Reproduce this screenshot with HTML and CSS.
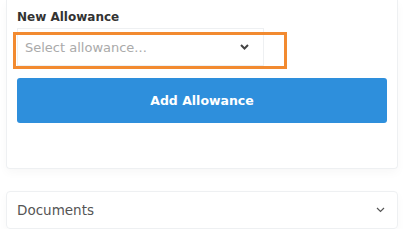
FILE: index.html
```html
<!DOCTYPE html>
<html lang="en">
<head>
    <meta charset="UTF-8">
    <meta name="viewport" content="width=device-width, initial-scale=1.0">
    <title>Allowances</title>
    <link rel="stylesheet" href="styles.css">
</head>
<body>

    <div class="page">
        <!-- Allowance Card -->
        <div class="card">
            <label class="field-label" for="allowance">New Allowance</label>
            <div class="select-row">
                <div class="select" id="allowance">
                    <span class="placeholder">Select allowance...</span>
                    <svg class="select-arrow" width="9" height="6" viewBox="0 0 9 6">
                        <path d="M1 1 L4.5 4.5 L8 1" fill="none" stroke="#444" stroke-width="2"/>
                    </svg>
                </div>
                <!-- highlight box -->
                <div class="highlight"></div>
            </div>
            <button class="add-btn">Add Allowance</button>
        </div>

        <!-- Documents Section -->
        <div class="collapse">
            <span>Documents</span>
            <svg width="9" height="6" viewBox="0 0 9 6">
                <path d="M1 1 L4.5 4.5 L8 1" fill="none" stroke="#555" stroke-width="1.2"/>
            </svg>
        </div>
    </div>

</body>
</html>
```

FILE: styles.css
```css
body {
    font-family: "DejaVu Sans", sans-serif;
    margin: 0;
    padding: 0;
    background: #fff;
    color: #333;
}

.page {
    padding: 0 15px 0 6px;
}

/* Card */
.card {
    background: #fff;
    border: 1px solid #eef0f2;
    border-top: none;
    border-radius: 0 0 4px 4px;
    padding: 10px 10px 45px 10px;
    box-shadow: 0 4px 10px rgba(0, 0, 0, 0.03);
}

.field-label {
    display: block;
    font-size: 12px;
    font-weight: bold;
    color: #333;
    margin-bottom: 4px;
}

.select-row {
    position: relative;
}

.select {
    width: 247px;
    height: 38px;
    box-sizing: border-box;
    border: 1px solid #eef0f2;
    display: flex;
    align-items: center;
    justify-content: space-between;
    padding: 0 14px 0 7px;
}
.placeholder {
    font-size: 13px;
    color: #aaa;
}

.highlight {
    position: absolute;
    left: -4px;
    top: 4px;
    width: 268px;
    height: 31px;
    border: 3px solid #f28a30;
}

.add-btn {
    display: block;
    width: 100%;
    height: 45px;
    margin-top: 12px;
    background: #2e8fdc;
    color: #fff;
    border: none;
    border-radius: 3px;
    font-family: "DejaVu Sans", sans-serif;
    font-size: 12.5px;
    font-weight: bold;
}

/* Collapse row */
.collapse {
    margin-top: 22px;
    height: 38px;
    box-sizing: border-box;
    border: 1px solid #eef0f2;
    border-radius: 4px;
    display: flex;
    align-items: center;
    justify-content: space-between;
    padding: 0 12px 0 10px;
    font-size: 13.5px;
    color: #555;
    box-shadow: 0 4px 10px rgba(0, 0, 0, 0.03);
}
```
